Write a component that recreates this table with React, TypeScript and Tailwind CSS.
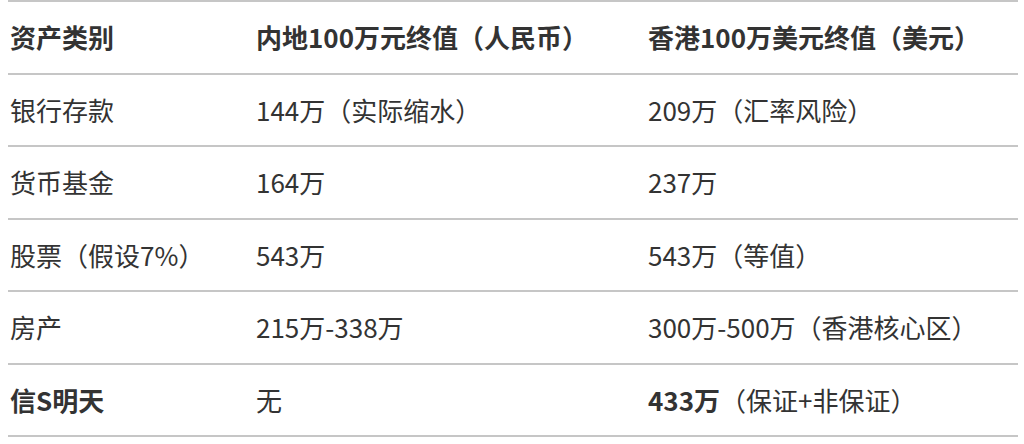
import React from "react";

const rows: { c1: React.ReactNode; c2: React.ReactNode; c3: React.ReactNode; bold1?: boolean }[] = [
  { c1: "银行存款", c2: "144万（实际缩水）", c3: "209万（汇率风险）" },
  { c1: "货币基金", c2: "164万", c3: "237万" },
  { c1: "股票（假设7%）", c2: "543万", c3: "543万（等值）" },
  { c1: "房产", c2: "215万-338万", c3: "300万-500万（香港核心区）" },
  {
    c1: <span className="font-bold">信S明天</span>,
    c2: "无",
    c3: (
      <>
        <span className="font-bold">433万</span>（保证+非保证）
      </>
    ),
  },
];

export default function App() {
  return (
    <div
      className="w-[1024px] h-[444px] bg-white overflow-hidden"
      style={{ fontFamily: '"Noto Sans CJK SC", "Noto Sans", sans-serif' }}
    >
      <div className="ml-[8px] w-[1010px] border-t-2 border-[#c6c6c6] text-[26px] text-[#333333] leading-none">
        <div className="grid grid-cols-[248px_392px_1fr] h-[72.5px] items-center border-b-2 border-[#c6c6c6] font-bold">
          <div className="pl-[2px]">资产类别</div>
          <div>内地100万元终值（人民币）</div>
          <div>香港100万美元终值（美元）</div>
        </div>
        {rows.map((r, i) => (
          <div
            key={i}
            className="grid grid-cols-[248px_392px_1fr] h-[72.5px] items-center border-b-2 border-[#c6c6c6]"
          >
            <div className="pl-[2px]">{r.c1}</div>
            <div>{r.c2}</div>
            <div>{r.c3}</div>
          </div>
        ))}
      </div>
    </div>
  );
}
